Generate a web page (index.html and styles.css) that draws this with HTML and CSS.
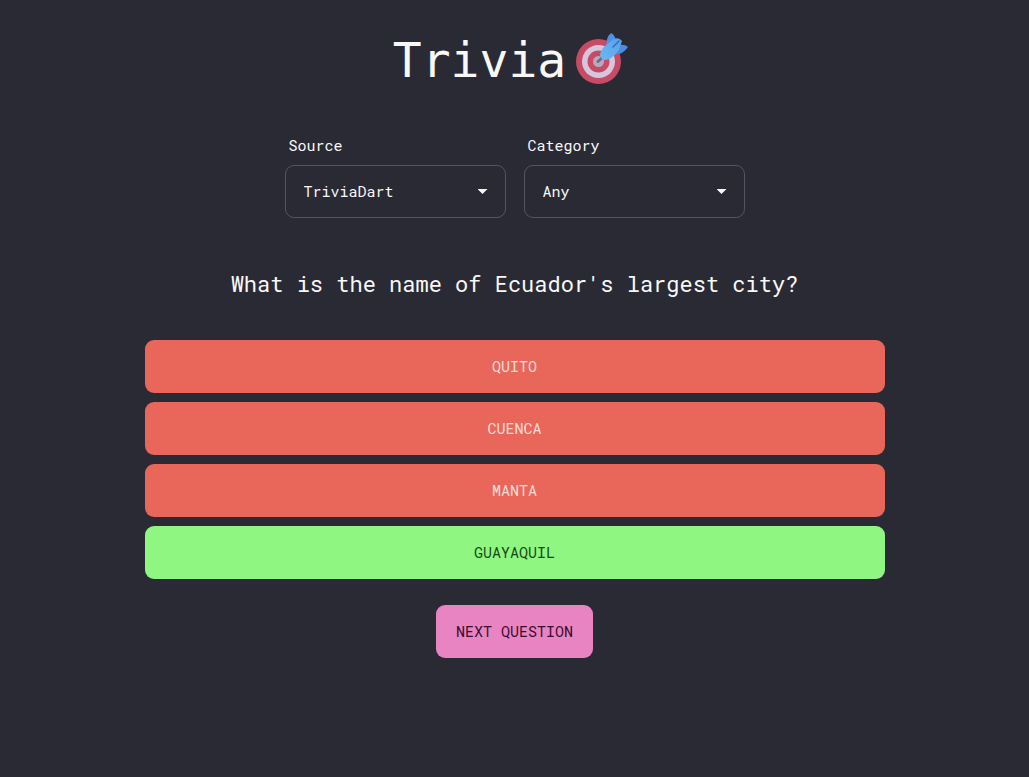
FILE: index.html
```html
<!DOCTYPE html>
<html lang="en">
<head>
<meta charset="utf-8">
<meta name="viewport" content="width=device-width, initial-scale=1">
<title>Trivia</title>
<link rel="stylesheet" href="styles.css">
</head>
<body>
<main class="page">
  <h1 class="title"><span class="name">Trivia</span>
    <svg class="dart" viewBox="0 0 52 52" aria-hidden="true">
      <defs>
        <linearGradient id="wing" x1="0" y1="1" x2="1" y2="0">
          <stop offset="0" stop-color="#68b8f2"/>
          <stop offset="1" stop-color="#5a9fea"/>
        </linearGradient>
      </defs>
      <circle cx="22.5" cy="29.5" r="22.5" fill="#c84b66"/>
      <circle cx="22.5" cy="29.5" r="16.5" fill="#d5c6dd"/>
      <circle cx="22.5" cy="29.5" r="11" fill="#c84b66"/>
      <circle cx="22.5" cy="29.5" r="5.5" fill="#b9a9bf"/>
      <path d="M22 29.5 27 25" stroke="#697085" stroke-width="3" stroke-linecap="round"/>
      <path d="M31 16 Q29 6 35 1 Q39 3 40 9 L38 18Z" fill="#4f92e4"/>
      <path d="M36 22 Q46 24 52 15 Q49 12 43 13 L36 16Z" fill="#4a8ce0"/>
      <path d="M24 24 Q24 18 30 13 L38 7 Q43 5 46 9 L43 18 Q35 29 27 28Z" fill="url(#wing)"/>
      <path d="M37 15 43 9" stroke="#2f6fc5" stroke-width="1.5" stroke-linecap="round"/>
    </svg>
  </h1>

  <form class="filters">
    <div class="field">
      <label class="label" for="source">Source</label>
      <div class="control">
        <select class="select" id="source"><option>TriviaDart</option></select>
      </div>
    </div>
    <div class="field">
      <label class="label" for="category">Category</label>
      <div class="control">
        <select class="select" id="category"><option>Any</option></select>
      </div>
    </div>
  </form>

  <h2 class="question">What is the name of Ecuador's largest city?</h2>

  <div class="answers">
    <button class="btn wrong" type="button">QUITO</button>
    <button class="btn wrong" type="button">CUENCA</button>
    <button class="btn wrong" type="button">MANTA</button>
    <button class="btn correct" type="button">GUAYAQUIL</button>
  </div>

  <button class="btn next" type="button">NEXT QUESTION</button>
</main>
</body>
</html>
```

FILE: styles.css
```css
* {
  box-sizing: border-box;
}

body {
  margin: 0;
  min-height: 100vh;
  background: #2a2a35;
  color: #f8f8f8;
  font-family: "Roboto Mono", "DejaVu Sans Mono", "Liberation Mono", monospace;
  font-size: 15px;
  line-height: 20px;
}

.page {
  display: flex;
  flex-direction: column;
  align-items: center;
  max-width: 776px;
  margin: 0 auto;
  padding: 32px 18px;
}

.title {
  display: flex;
  align-items: center;
  gap: 10px;
  margin: 0;
  padding-right: 8px;
  font-family: "DejaVu Sans Mono", monospace;
  font-size: 48px;
  font-weight: 400;
  line-height: 48px;
}

.name {
  padding-top: 4px;
}

.dart {
  width: 52px;
  height: 52px;
}

.filters {
  display: flex;
  flex-wrap: wrap;
  justify-content: center;
  gap: 18px;
  width: 100%;
  margin-top: 51px;
}

.field {
  display: flex;
  flex-direction: column;
  gap: 10px;
  flex: 0 1 221px;
}

.label {
  padding: 0 4px;
}

.control {
  position: relative;
}

.control::after {
  content: "";
  position: absolute;
  top: 24px;
  right: 18px;
  width: 10px;
  height: 5px;
  background: #f8f8f8;
  clip-path: polygon(0 0, 100% 0, 50% 100%);
  pointer-events: none;
}

.select {
  appearance: none;
  display: block;
  width: 100%;
  padding: 15px 40px 15px 18px;
  border: 1px solid #54545d;
  border-radius: 9px;
  background: #2a2a35;
  color: inherit;
  font: inherit;
  line-height: 21px;
}

.question {
  margin: 51px 0 0;
  font-size: 22px;
  font-weight: 400;
  line-height: 30px;
  text-align: center;
}

.answers {
  display: flex;
  flex-direction: column;
  gap: 9px;
  width: 100%;
  margin-top: 41px;
}

.btn {
  padding: 16px 20px;
  border: 0;
  border-radius: 9px;
  font: inherit;
  line-height: 21px;
  cursor: pointer;
}

.wrong {
  background: #e9675a;
  color: #fbdcd8;
}

.correct {
  background: #90f682;
  color: #164a10;
}

.next {
  margin-top: 26px;
  background: #e984c3;
  color: #3c0c30;
}
```
